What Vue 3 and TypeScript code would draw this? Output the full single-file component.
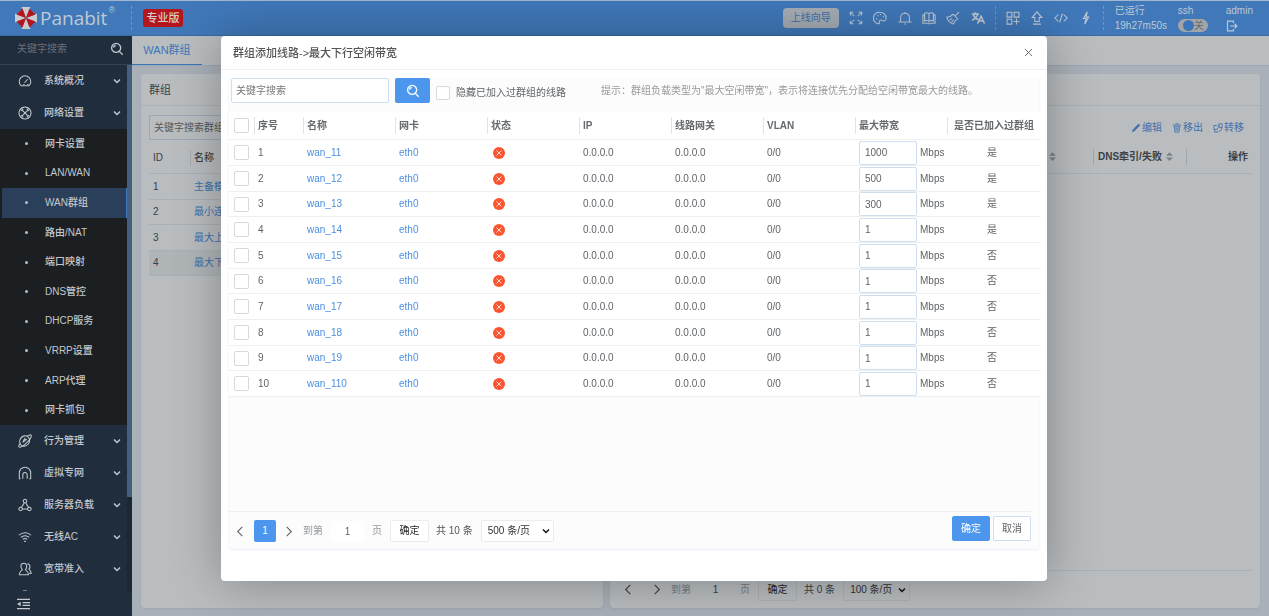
<script setup lang="ts">
import { ref } from 'vue'

interface MenuEntry {
  label: string
  icon: string
}

interface Line {
  id: number
  name: string
  bandwidth: string
  joined: boolean
}

const icons: Record<string, string> = {
  gauge: 'M3.5 13.5h9a6.6 6.6 0 1 0-9 0zM7.5 10l3.5-4M6 12h1.5M10.5 12H12',
  network: 'M8 1.2a6.8 6.8 0 1 0 .01 0zM5 5l6 6M11 5l-6 6M3.5 5.5l2.5-2.5M10 3l2.5 2.5M3.5 10.5l2.5 2.5M10 13l2.5-2.5',
  planet: 'M12.5 4.5C10 1 5 1.500 3 5s-1 7 1.500 8.500M12.500 4.500c1.500 3 .5 7-2.500 8.500s-5 .8-6 0M10.500 2.500c2.500-1.800 4-1.800 4.500-1 .8 1.500-2 5.500-5.500 9S2 15.800 1.200 14.800c-.7-.8.200-2.800 1.800-5M5.500 9.500l2-4 2 1z',
  arch: 'M1.500 14.500V8a6.500 6.500 0 0 1 13 0v6.500M5.500 14.500V10a2.500 2.500 0 0 1 5 0v4.500M1 14.500h2M13 14.500h2',
  nodes: 'M8 1.500a2 2 0 1 0 .01 0zM3 10.500a2 2 0 1 0 .01 0zM13 10.500a2 2 0 1 0 .01 0zM7.200 5.400L4 10.700M8.800 5.400l3.200 5.300M5 12.500h6',
  wifi: 'M1 6a10 10 0 0 1 14 0M3.300 8.500a6.800 6.800 0 0 1 9.400 0M5.500 10.800a3.800 3.800 0 0 1 5 0M7 13h2',
  users: 'M6.500 1.500c4 0 4.500 5 2 7.200 0 1.300 3.500 1.500 3.500 5.800H1.500c0-4.300 3.500-4.500 3.500-5.800-2.500-2.200-2.300-7.200 1.500-7.200zM10.500 2c3.500 0 4 4.200 2 6 .3 1.500 2.500 1.800 2.500 5h-2',
  fullscreen: 'M1.5 5v-3.500h3.500M11 1.500h3.500v3.500M14.500 11v3.500h-3.500M5 14.500h-3.500v-3.500M2 2l4 4M14 2l-4 4M14 14l-4-4M2 14l4-4',
  palette: 'M8 1.500A6.500 6.500 0 1 0 6 14.500c1.500.3 1.500-1 1.200-2.200C7 10.500 9 9.800 10.500 10.800c1.500 1.200 4.500.7 4.500-2.800 0-4-3.500-6.500-7-6.500zM4.500 5.500H6M7.700 4H9.200M11 6.500h1.500M3.500 9H5',
  bell: 'M3 12.500V7.500a5 5 0 0 1 10 0v5M.5 12.500h15M7 14.800h2M8 1v1.500',
  book: 'M8 3.500C7 1.500 4 1.500 3 3v8.500c1.500-1.200 4-1 5 .8 1-1.800 3.500-2 5-.8V3c-1-1.500-4-1.500-5 .5zM8 3.500v9M3 4.500H1v9.500h5.500c.8 0 1 .8 1.500.8s.7-.8 1.500-.8H15V4.500h-2',
  broom: 'M14.800 1.200l-4 4M8 3.500l4.500 4.500M8 3.500C6 6 4 7 1 7.200 2 11 5 14 8.500 14.800 9.500 12 11 10 13.500 9l-1-1M4 10.500l3-2M6.200 12.700l2.500-2.500',
  translate: 'M1 3.500h8M5 1.500v2M2.500 3.500c.8 3 3 5.500 6 6.500M7.700 3.500c-.7 3-3.200 5.500-6.500 7M7.500 14.500L11.500 6l4 8.500M9 11.500h5',
  grid: 'M1.200 1.500h5.500v5.500H1.200zM9.300 1.500h5.500v5.500H9.300zM1.200 9.500h5.500v5.500H1.200zM12 8.500v7M8.500 12h7',
  upload: 'M5.500 12V7.500H2.500L8 1l5.500 6.500h-3V12zM3.500 15h9',
  code: 'M5 4L1 8l4 4M11 4l4 4-4 4M9.500 3l-3 10',
  bolt: 'M9.500 1L5 8.500h3L6.500 15 11 7H8z',
  exit: 'M10 4V1.500H2v13h8V12M5.500 8h9M11.500 5l3 3-3 3'
}

const topMenu: MenuEntry[] = [
  { label: '系统概况', icon: 'gauge' },
  { label: '网络设置', icon: 'network' }
]
const subMenu = ['网卡设置', 'LAN/WAN', 'WAN群组', '路由/NAT', '端口映射', 'DNS管控', 'DHCP服务', 'VRRP设置', 'ARP代理', '网卡抓包']
const lowMenu: MenuEntry[] = [
  { label: '行为管理', icon: 'planet' },
  { label: '虚拟专网', icon: 'arch' },
  { label: '服务器负载', icon: 'nodes' },
  { label: '无线AC', icon: 'wifi' },
  { label: '宽带准入', icon: 'users' }
]
const toolsA = ['fullscreen', 'palette', 'bell', 'book', 'broom', 'translate']
const toolsB = ['grid', 'upload', 'code', 'bolt']
const groups = ['主备模式', '最小连接', '最大上行', '最大下行']
const columns = ['序号', '名称', '网卡', '状态', 'IP', '线路网关', 'VLAN', '最大带宽', '是否已加入过群组']

const lines = ref<Line[]>(
  ['1000', '500', '300', '1', '1', '1', '1', '1', '1', '1'].map((bandwidth, i) => ({
    id: i + 1,
    name: `wan_1${i + 1}`,
    bandwidth,
    joined: i < 4
  }))
)
const activeSub = ref('WAN群组')
const sshOn = ref(false)
</script>

<template>
  <div class="page">
    <header class="topbar">
      <div class="brand">
        <svg class="logo" viewBox="0 0 24 24">
          <path fill="#c9ccd0" d="M12 12L7.500 1h9zM12 12l11-4.500v9zM12 12l4.500 11h-9zM12 12L1 16.500v-9z" />
          <path fill="#b5161c" d="M12 12L8.500 2.500 2.500 8.500zM12 12l3.500-9.500 6 6zM12 12l9.500 3.500-6 6zM12 12l-3.500 9.500-6-6z" />
        </svg>
        <span class="brand-name">Panabit</span><sup class="reg">®</sup>
      </div>
      <i class="dash"></i>
      <span class="edition">专业版</span>
      <button class="guide">上线向导</button>
      <nav class="tools tools-a">
        <button v-for="t in toolsA" :key="t" class="bare" :aria-label="t">
          <svg class="ico" :class="t" viewBox="0 0 16 16"><path :d="icons[t]" /></svg>
        </button>
      </nav>
      <i class="dash"></i>
      <nav class="tools tools-b">
        <button v-for="t in toolsB" :key="t" class="bare" :aria-label="t">
          <svg class="ico" viewBox="0 0 16 16"><path :d="icons[t]" /></svg>
        </button>
      </nav>
      <i class="dash"></i>
      <div class="stat uptime"><span>已运行</span><span>19h27m50s</span></div>
      <div class="stat ssh">
        <span>ssh</span>
        <button class="switch" role="switch" :aria-checked="sshOn" aria-label="ssh" @click="sshOn = !sshOn">
          <i></i>{{ sshOn ? '开' : '关' }}
        </button>
      </div>
      <div class="stat">
        <span>admin</span>
        <button class="bare" aria-label="exit"><svg class="ico exit" viewBox="0 0 16 16"><path :d="icons.exit" /></svg></button>
      </div>
    </header>

    <div class="body">
      <aside class="side">
        <div class="side-search">
          <input type="text" placeholder="关键字搜索" aria-label="关键字搜索" />
          <svg class="lens" viewBox="0 0 16 16"><path d="M7 1.500a5.200 5.200 0 1 0 .01 0zM11 11l3.500 3.500M4 6.500A3 3 0 0 1 6.500 4" /></svg>
        </div>
        <div class="side-main">
          <nav class="menu">
            <a v-for="m in topMenu" :key="m.label" class="item" href="#">
              <svg class="ico" viewBox="0 0 16 16"><path :d="icons[m.icon]" /></svg>
              <span>{{ m.label }}</span>
              <svg class="chev" viewBox="0 0 8 6"><path d="M1 1.500l3 3 3-3" /></svg>
            </a>
            <div class="sub">
              <a v-for="s in subMenu" :key="s" href="#" :class="{ on: s === activeSub }" @click.prevent="activeSub = s"><i></i>{{ s }}</a>
            </div>
            <a v-for="m in lowMenu" :key="m.label" class="item" href="#">
              <svg class="ico" viewBox="0 0 16 16"><path :d="icons[m.icon]" /></svg>
              <span>{{ m.label }}</span>
              <svg class="chev" viewBox="0 0 8 6"><path d="M1 1.500l3 3 3-3" /></svg>
            </a>
            <i class="peek"></i>
          </nav>
          <div class="track"><i></i></div>
        </div>
        <div class="side-foot">
          <svg viewBox="0 0 14 12"><path d="M0 1h14M6 4.500h8M6 7.500h8M0 11h14" /><path class="tri" d="M0 6l4-2.500v5z" /></svg>
        </div>
      </aside>

      <main class="main">
        <div class="tabs"><a href="#" class="tab">WAN群组</a></div>
        <div class="cards">
          <section class="card left">
            <h2>群组</h2>
            <div class="card-body">
              <input class="find" type="text" placeholder="关键字搜索群组" aria-label="关键字搜索群组" />
              <table class="grp">
                <colgroup><col class="g-id" /><col /></colgroup>
                <thead><tr><th>ID</th><th class="split">名称</th></tr></thead>
                <tbody>
                  <tr v-for="(g, i) in groups" :key="g" :class="{ sel: i === 3 }">
                    <td>{{ i + 1 }}</td>
                    <td class="split"><a href="#">{{ g }}</a></td>
                  </tr>
                </tbody>
              </table>
            </div>
          </section>
          <section class="card right">
            <h2></h2>
            <div class="card-body">
              <div class="acts">
                <a href="#"><svg viewBox="0 0 12 12"><path class="solid" d="M1 11l1-3L9 .8 11 2.800 4 10z" /></svg>编辑</a>
                <a href="#"><svg viewBox="0 0 12 12"><path d="M1 2.500h10M4 1h4M2 4.500h8M3 4.500l.5 6.500h5l.5-6.500M5 5.500v4M7 5.500v4" /></svg>移出</a>
                <a href="#"><svg viewBox="0 0 12 12"><path d="M4.500 3H1v4.500h4.500V6M7 1h4v4.500H7zM5.500 4.500L8 3.500M2 7.500V11h3.500M4.500 9.500l1.500 1.500M10.500 5.500c0 3-1 4-3.500 4.500" /></svg>转移</a>
              </div>
              <div class="cols">
                <span class="c-sort"><svg class="sort" viewBox="0 0 8 10"><path d="M0 4l4-4 4 4zM0 6l4 4 4-4z" /></svg></span>
                <span class="c-dns">DNS牵引/失败<svg class="sort" viewBox="0 0 8 10"><path d="M0 4l4-4 4 4zM0 6l4 4 4-4z" /></svg></span>
                <span class="c-op">操作</span>
              </div>
              <div class="filler"></div>
              <div class="pager dim">
                <button class="bare arrow" aria-label="上一页"><svg viewBox="0 0 8 12"><path d="M6.500 1L1.500 6l5 5" /></svg></button>
                <button class="bare arrow next" aria-label="下一页"><svg viewBox="0 0 8 12"><path d="M1.500 1l5 5-5 5" /></svg></button>
                <label for="pg-b">到第</label>
                <input id="pg-b" class="goto" type="text" value="1" />
                <span class="ye">页</span>
                <button class="ok">确定</button>
                <span class="total">共 0 条</span>
                <span class="pick">
                  <select aria-label="每页条数"><option>100 条/页</option></select>
                  <svg class="chev" viewBox="0 0 8 6"><path d="M1 1.500l3 3 3-3" /></svg>
                </span>
              </div>
            </div>
          </section>
        </div>
      </main>
    </div>

    <div class="overlay">
      <div class="modal" role="dialog" aria-labelledby="dlg-title">
        <div class="modal-head">
          <h1 id="dlg-title">群组添加线路-&gt;最大下行空闲带宽</h1>
          <button class="bare" aria-label="关闭"><svg viewBox="0 0 10 10"><path d="M1 1l8 8M9 1L1 9" /></svg></button>
        </div>
        <div class="panel">
          <div class="filter">
            <input class="kw" type="text" placeholder="关键字搜索" aria-label="关键字搜索" />
            <button class="go" aria-label="搜索">
              <svg class="lens" viewBox="0 0 16 16"><path d="M7 1.500a5.200 5.200 0 1 0 .01 0zM11 11l3.500 3.500M4 6.500A3 3 0 0 1 6.500 4" /></svg>
            </button>
            <label class="hide"><input type="checkbox" />隐藏已加入过群组的线路</label>
            <span class="hint">提示：群组负载类型为"最大空闲带宽"，表示将连接优先分配给空闲带宽最大的线路。</span>
          </div>
          <table class="grid">
            <colgroup>
              <col class="w-check" /><col class="w-no" /><col class="w-col" /><col class="w-col" /><col class="w-col" />
              <col class="w-col" /><col class="w-col" /><col class="w-col" /><col class="w-col" /><col class="w-last" />
            </colgroup>
            <thead>
              <tr>
                <th><input type="checkbox" aria-label="全选" /></th>
                <th v-for="c in columns" :key="c"><span>{{ c }}</span></th>
              </tr>
            </thead>
            <tbody>
              <tr v-for="l in lines" :key="l.id">
                <td><input type="checkbox" :aria-label="l.name" /></td>
                <td>{{ l.id }}</td>
                <td><a href="#">{{ l.name }}</a></td>
                <td><a href="#">eth0</a></td>
                <td><svg class="bad" viewBox="0 0 12 12"><circle cx="6" cy="6" r="6" /><path d="M3.500 3.500l5 5M8.500 3.500l-5 5" /></svg></td>
                <td>0.0.0.0</td>
                <td>0.0.0.0</td>
                <td>0/0</td>
                <td class="bw"><div><input v-model="l.bandwidth" type="text" :aria-label="l.name + ' Mbps'" />Mbps</div></td>
                <td class="joined">{{ l.joined ? '是' : '否' }}</td>
              </tr>
            </tbody>
          </table>
          <div class="filler"></div>
          <div class="foot">
            <div class="pager">
              <button class="bare arrow" aria-label="上一页"><svg viewBox="0 0 8 12"><path d="M6.500 1L1.500 6l5 5" /></svg></button>
              <button class="cur">1</button>
              <button class="bare arrow" aria-label="下一页"><svg viewBox="0 0 8 12"><path d="M1.500 1l5 5-5 5" /></svg></button>
              <label for="pg-a">到第</label>
              <input id="pg-a" class="goto" type="text" value="1" />
              <span class="ye">页</span>
              <button class="ok">确定</button>
              <span class="total">共 10 条</span>
              <span class="pick">
                <select aria-label="每页条数"><option>500 条/页</option></select>
                <svg class="chev" viewBox="0 0 8 6"><path d="M1 1.500l3 3 3-3" /></svg>
              </span>
            </div>
            <div class="btns"><button class="primary">确定</button><button class="plain">取消</button></div>
          </div>
        </div>
      </div>
    </div>
  </div>
</template>

<style>
body { margin: 0; }
</style>

<style scoped>
.page, .page * { box-sizing: border-box; }
.page {
  height: 100vh;
  display: flex;
  flex-direction: column;
  overflow: hidden;
  font: 10px/14px "Liberation Sans", "Noto Sans CJK SC", sans-serif;
  color: #3d4043;
  background: #a9b0b7;
}
button, input, select { font: inherit; color: inherit; margin: 0; }
button { cursor: pointer; padding: 0; }
a { color: inherit; text-decoration: none; }
svg { display: block; fill: none; stroke: currentColor; }
.bare { border: 0; background: none; display: flex; align-items: center; justify-content: center; }
.ico { width: 14px; height: 14px; stroke-width: 1.2; }
.ico.translate { stroke-width: 1.8; }

.topbar {
  flex: none;
  height: 36px;
  display: flex;
  align-items: center;
  padding: 0 16px 0 14px;
  background: #4078b9;
  border-top: 1px solid #9fb6cf;
  border-bottom: 1px solid #3b6ba3;
  color: #bfc9d4;
}
.brand { display: flex; align-items: center; width: 117px; }
.logo { width: 24px; height: 24px; stroke: none; }
.brand-name { font: 19px/24px "Open Sans", sans-serif; margin-left: 2px; }
.reg { font-size: 9px; align-self: flex-start; line-height: 9px; margin-left: 1px; }
.dash { height: 24px; border-left: 1px dashed #7396bf; }
.edition {
  margin-left: 11px;
  width: 40px;
  height: 18px;
  border-radius: 3px;
  background: #b3171c;
  color: #d5cdd0;
  font: 500 11px/18px "Liberation Sans", "Noto Sans CJK SC", sans-serif;
  text-align: center;
}
.guide { margin-left: auto; width: 56px; height: 20px; border: 0; border-radius: 4px; background: #a5acb3; color: #3d6ea9; }
.tools { display: flex; justify-content: space-around; }
.tools-a { width: 146px; margin: 0 5px; }
.tools-b { width: 97px; margin: 0 5px; }
.stat { display: flex; flex-direction: column; align-items: flex-start; gap: 1px; }
.uptime { width: 63px; margin-left: 11px; }
.ssh { width: 48px; }
.stat .bare { height: 14px; }
.exit { width: 12px; height: 12px; stroke-width: 1.5; }
.switch {
  display: flex;
  align-items: center;
  justify-content: space-between;
  width: 30px;
  height: 13px;
  padding: 0 4px 0 5px;
  border: 0;
  border-radius: 7px;
  background: #a3a6a8;
  color: #666c72;
  line-height: 13px;
}
.switch i { width: 11px; height: 11px; border-radius: 50%; background: #3d76b8; }

.body { flex: 1; display: flex; min-height: 0; }
.side { flex: none; width: 132px; display: flex; flex-direction: column; background: #202d3d; color: #c3c8ce; }
.side-search { flex: none; height: 29px; display: flex; align-items: center; padding: 0 8px 3px 17px; border-bottom: 1px solid #39434f; }
.side-search input { flex: 1; min-width: 0; padding: 0; border: 0; outline: 0; background: none; }
.side-search input::placeholder { color: #66707a; opacity: 1; }
.lens { width: 14px; height: 14px; stroke-width: 1.5; }
.side-main { flex: 1; display: flex; min-height: 0; }
.menu { flex: 1; min-width: 0; overflow: hidden; font-weight: 500; }
.item { display: flex; align-items: center; height: 32px; padding: 0 6px 0 18px; }
.item span { margin-left: 12px; flex: 1; }
.chev { width: 8px; height: 6px; stroke-width: 1.5; }
.sub { height: 296px; display: grid; grid-auto-rows: 1fr; background: #1b1f22; }
.sub a { display: flex; align-items: center; padding-left: 23px; margin-left: 2px; border-right: 1px solid transparent; }
.sub a i { width: 3px; height: 3px; border-radius: 50%; background: #b8bec5; margin-right: 17px; }
.sub a.on { background: #2a3f59; border-right-color: #4078b9; }
.peek { display: block; width: 4px; height: 1px; margin: 5px 0 0 23px; background: #7d8690; }
.track { width: 5px; background: #1b2733; }
.track i { display: block; height: 82%; background: #45607f; }
.side-foot { flex: none; height: 24px; padding: 6px 0 0 17px; }
.side-foot svg { width: 13px; height: 12px; stroke-width: 1.5; }
.side-foot .tri { fill: currentColor; stroke: none; }

.main { flex: 1; min-width: 0; display: flex; flex-direction: column; }
.tabs { flex: none; height: 30px; background: #b9bdc0; border-bottom: 1px solid #9ba8b6; }
.tab { display: block; width: 70px; height: 29px; border-bottom: 1px solid #3d76b8; font-size: 11px; line-height: 28px; text-align: center; color: #3d76b8; }
.cards { flex: 1; min-height: 0; display: flex; gap: 7px; padding: 8px 9px; }
.card { display: flex; flex-direction: column; border-radius: 4px; background: #b9bdc0; box-shadow: 0 1px 2px #9ba8b6; min-width: 0; overflow: hidden; }
.left { flex: 462; }
.right { flex: 650; }
.card h2 { flex: none; margin: 0; height: 32px; padding-left: 8px; border-bottom: 1px solid #acb1b5; font-size: 11px; font-weight: 400; line-height: 32px; }
.card-body { flex: 1; display: flex; flex-direction: column; padding: 9px 8px 0; }
.find { width: 158px; height: 25px; padding: 0 4px; border: 1px solid #9ba8b6; background: none; outline: 0; }
.find::placeholder { color: #54595e; opacity: 1; }
.grp { width: 100%; margin-top: 2px; table-layout: fixed; border-collapse: separate; border-spacing: 0; }
.g-id { width: 41px; }
.grp th, .grp td { height: 25px; padding: 0 4px; text-align: left; border-bottom: 1px solid #abb0b4; }
.grp tbody tr:nth-child(odd) td { height: 26px; }
.grp th { height: 32px; font-weight: 500; }
.grp th.split { background: linear-gradient(#a5aaae, #a5aaae) 0 8px / 1px 16px no-repeat; }
.grp a, .acts { color: #3d70ac; }
.grp .sel { background: #afb5b7; }
.acts { display: flex; justify-content: flex-end; gap: 10px; height: 25px; padding: 0 8px 0 0; align-items: center; }
.acts a { display: flex; align-items: center; gap: 1px; }
.acts svg { width: 10px; height: 10px; }
.acts .solid { fill: currentColor; stroke: none; }
.cols { display: flex; justify-content: flex-end; align-items: center; height: 34px; border-bottom: 1px solid #abb0b4; font-weight: bold; }
.sort { width: 7px; height: 9px; fill: #7d8286; stroke: none; }
.c-sort { width: 44px; }
.c-dns, .c-op { height: 16px; line-height: 16px; border-left: 1px solid #a2a7ab; display: flex; align-items: center; }
.c-dns { width: 93px; padding-left: 4px; justify-content: flex-start; gap: 4px; white-space: nowrap; }
.c-op { width: 66px; padding-right: 4px; justify-content: flex-end; }
.filler { flex: 1; }

.overlay { position: fixed; inset: 0; display: flex; padding: 36px 222px 35px 221px; }
.modal { flex: 1; min-width: 0; display: flex; flex-direction: column; padding: 0 8px 32px; border-radius: 4px; background: #fff; box-shadow: 1px 1px 50px rgba(0, 0, 0, 0.3); color: #606468; }
.modal-head { flex: none; height: 34px; display: flex; align-items: center; justify-content: space-between; margin: 0 -8px 8px; padding: 0 14px 0 12px; border-bottom: 1px solid #eeeff0; }
h1 { margin: 0; font-size: 11px; line-height: 16px; font-weight: 500; color: #555; }
.modal-head svg { width: 9px; height: 9px; }
.panel { flex: 1; min-height: 0; display: flex; flex-direction: column; border-radius: 4px; background: #fcfcfd; box-shadow: 0 1px 3px #e6ebf6; }
.filter { flex: none; height: 34px; display: flex; align-items: flex-start; padding-left: 2px; white-space: nowrap; }
.kw { width: 158px; height: 25px; padding: 0 4px; border: 1px solid #cfdff2; border-radius: 2px; background: #fff; outline: 0; }
.kw::placeholder { color: #777; opacity: 1; }
.go { width: 35px; height: 25px; margin-left: 6px; border: 0; border-radius: 2px; background: #4c96ee; color: #fff; display: flex; align-items: center; justify-content: center; }
.hide { display: flex; align-items: center; gap: 6px; height: 29px; margin-left: 6px; }
.hint { margin-left: 35px; line-height: 26px; color: #999; }
input[type='checkbox'] { appearance: none; display: block; width: 15px; height: 15px; border: 1px solid #d8d9da; border-radius: 2px; background: #fff; }
.hide input { width: 14px; height: 14px; }

.grid { flex: none; width: 100%; table-layout: fixed; border-collapse: separate; border-spacing: 0; background: #fff; }
.w-check { width: 25px; }
.w-no { width: 49px; }
.w-col { width: 92px; }
.w-last { width: 94px; }
.grid th, .grid td { padding: 0 0 0 4px; text-align: left; white-space: nowrap; border-bottom: 1px solid #eeeff0; }
.grid th { height: 28px; font-weight: bold; color: #666a6e; }
.grid th + th { background: linear-gradient(#e2e3e4, #e2e3e4) 0 5px / 1px 17px no-repeat; }
.grid th:last-child { padding-left: 7px; }
.grid th:first-child, .grid td:first-child { padding-left: 5px; }
.grid tbody tr { height: 26px; }
.grid tbody tr:nth-child(3n) { height: 25px; }
.grid td a { color: #4c8fdf; }
.bad { width: 12px; height: 12px; margin-left: 2px; fill: #fb5430; stroke: none; }
.bad path { stroke: #ffd9cf; stroke-width: 1; }
.bw div { display: flex; align-items: center; gap: 3px; height: 24px; }
.bw input { width: 58px; height: 24px; padding: 0 5px; border: 1px solid #cfdff2; border-radius: 2px; background: #fff; outline: 0; }
.grid td.joined { padding: 0 4px 0 0; text-align: center; }

.foot { flex: none; height: 38px; display: flex; justify-content: space-between; margin-right: 8px; border-top: 1px solid #eeeff0; }
.pager { display: flex; align-items: center; height: 38px; white-space: nowrap; }
.arrow { width: 16px; height: 22px; margin: 0 4px 0 2px; }
.arrow svg { width: 8px; height: 11px; stroke-width: 1.2; }
.foot .pager .arrow { margin: 0 6px 0 3px; }
.foot .pager .cur + .arrow { margin-left: 5px; }
.cur { width: 22px; height: 22px; border: 0; border-radius: 2px; background: #4c96ee; color: #fff; }
.pager label, .ye { color: #96999c; }
.goto { width: 33px; height: 21px; margin: 0 8px; padding: 0; border: 0; border-radius: 2px; background: #fff; text-align: center; outline: 0; }
.ok { width: 39px; height: 22px; margin: 0 7px 0 8px; border: 1px solid #ececed; border-radius: 2px; background: #fff; color: #222; }
.total { color: #555; }
.pick { position: relative; margin-left: 8px; }
.pick select { display: block; appearance: none; width: 73px; height: 22px; padding: 0 0 0 6px; border: 1px solid #ececed; border-radius: 2px; background: #fff; color: #333; outline: 0; }
.pick .chev { position: absolute; right: 4px; top: 8px; color: #111; }
.btns { display: flex; gap: 3px; margin-top: 4px; }
.btns button { width: 38px; height: 25px; border: 1px solid #cfdff2; border-radius: 2px; background: #fff; }
.btns .primary { border-color: #4c96ee; background: #4c96ee; color: #fff; }

.dim { border-top: 1px solid #abb0b4; }
.dim .next { margin-left: 9px; margin-right: 6px; }
.dim .goto, .dim .ok, .dim select { background: none; border-color: #aeb2b5; }
.dim label, .dim .ye { color: #777b7e; }
.dim select { width: 67px; }
.dim .total { color: #3d4043; }
</style>
